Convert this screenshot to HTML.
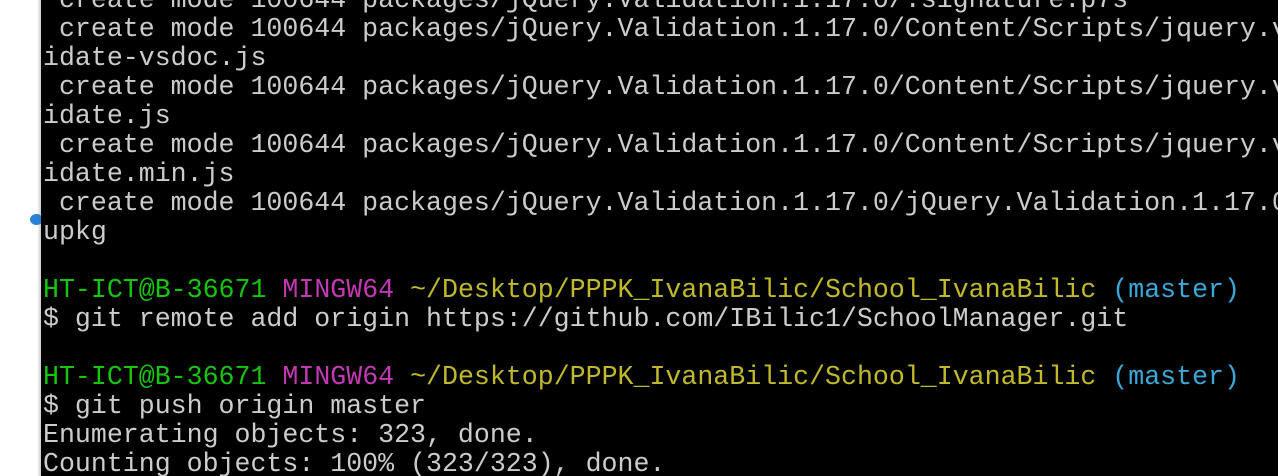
<!DOCTYPE html>
<html><head><style>
html,body{margin:0;padding:0;width:1278px;height:476px;overflow:hidden;background:#fff;}
#t{position:absolute;left:41px;top:0;width:1237px;height:476px;background:#000;overflow:hidden;}
pre{margin:0;position:absolute;left:2px;top:-14px;font-family:"Liberation Mono",monospace;font-size:26.6px;line-height:29px;color:#cccccc;white-space:pre;}
.g{color:#16c60c}.m{color:#c239b3}.y{color:#c1b929}.c{color:#3aa8d8}
#sh{position:absolute;left:37px;top:0;width:4px;height:476px;background:linear-gradient(90deg,#fff,#ccc);}
#bl{position:absolute;left:30px;top:214px;width:13px;height:11px;border-radius:50%;background:#2a82d6;}
</style></head><body>
<div id="sh"></div><div id="bl"></div>
<div id="t"><pre> create mode 100644 packages/jQuery.Validation.1.17.0/.signature.p7s
 create mode 100644 packages/jQuery.Validation.1.17.0/Content/Scripts/jquery.val
idate-vsdoc.js
 create mode 100644 packages/jQuery.Validation.1.17.0/Content/Scripts/jquery.val
idate.js
 create mode 100644 packages/jQuery.Validation.1.17.0/Content/Scripts/jquery.val
idate.min.js
 create mode 100644 packages/jQuery.Validation.1.17.0/jQuery.Validation.1.17.0.n
upkg

<span class="g">HT-ICT@B-36671</span> <span class="m">MINGW64</span> <span class="y">~/Desktop/PPPK_IvanaBilic/School_IvanaBilic</span> <span class="c">(master)</span>
$ git remote add origin https://github.com/IBilic1/SchoolManager.git

<span class="g">HT-ICT@B-36671</span> <span class="m">MINGW64</span> <span class="y">~/Desktop/PPPK_IvanaBilic/School_IvanaBilic</span> <span class="c">(master)</span>
$ git push origin master
Enumerating objects: 323, done.
Counting objects: 100% (323/323), done.</pre></div>
</body></html>
